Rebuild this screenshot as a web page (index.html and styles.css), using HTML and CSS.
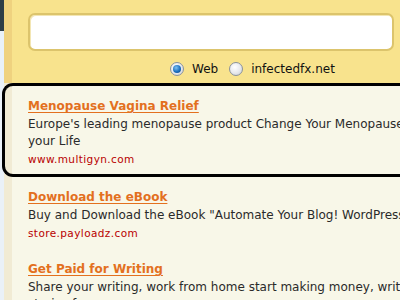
FILE: index.html
```html
<!DOCTYPE html>
<html>
<head>
<meta charset="utf-8">
<link rel="stylesheet" href="styles.css">
</head>
<body>
<div class="page">
  <header class="top">
    <div class="edge"></div>
    <div class="gutter"></div>
    <div class="panel">
      <div class="search"></div>
      <div class="scope">
        <span class="radio on"><span class="dot"></span></span>
        <span class="label">Web</span>
        <span class="radio"></span>
        <span class="label">infectedfx.net</span>
      </div>
    </div>
  </header>
  <main class="results">
    <div class="ad sel">
      <a class="title">Menopause Vagina Relief</a>
      <p class="desc">Europe's leading menopause product Change Your Menopause<br>your Life</p>
      <p class="url">www.multigyn.com</p>
    </div>
    <div class="ad">
      <a class="title">Download the eBook</a>
      <p class="desc">Buy and Download the eBook "Automate Your Blog! WordPress</p>
      <p class="url">store.payloadz.com</p>
    </div>
    <div class="ad">
      <a class="title">Get Paid for Writing</a>
      <p class="desc">Share your writing, work from home start making money, write<br>stories for money.</p>
    </div>
  </main>
</div>
</body>
</html>
```
FILE: styles.css
```css
html, body {
  margin: 0;
  padding: 0;
}
body {
  width: 400px;
  height: 300px;
  overflow: hidden;
  font-family: "DejaVu Sans", Verdana, sans-serif;
  background: #f8f7e8;
}
.page {
  width: 400px;
}
.top {
  display: flex;
  height: 83px;
}
.edge {
  width: 4px;
  background: linear-gradient(#2d3c46 0 31px, #e9f1f9 31px);
}
.gutter {
  width: 8px;
  background: #efd27f;
}
.panel {
  flex: 1;
  background: #f8e38d;
  padding: 13px 6px 0 16px;
}
.search {
  height: 34px;
  background: #fff;
  border: 2px solid #dcc46c;
  border-radius: 7px;
  box-shadow: inset 1px 1px 0 #f3e6b4;
}
.scope {
  display: flex;
  align-items: center;
  margin-top: 11px;
  padding-left: 142px;
  font-size: 12px;
  color: #111;
  height: 14px;
}
.label {
  margin-left: 8px;
  margin-right: 11px;
}
.radio {
  box-sizing: border-box;
  width: 14px;
  height: 14px;
  border-radius: 50%;
  border: 1px solid #8a929c;
  background: radial-gradient(circle at 40% 35%, #ffffff 0, #e6e8ec 55%, #c4c9d1 100%);
  display: flex;
  align-items: center;
  justify-content: center;
}
.dot {
  width: 8px;
  height: 8px;
  border-radius: 50%;
  background: radial-gradient(circle at 40% 35%, #7fc2f2 0, #1c70c0 55%, #0b3f7a 100%);
}
.results {
  display: flex;
  flex-direction: column;
  background: linear-gradient(to right, #eaf1f8 0 4px, #f1ebd4 4px 12px, #f8f7e8 12px);
  height: 217px;
}
.ad {
  padding: 10px 0 6px 28px;
  white-space: nowrap;
}
.ad.sel {
  margin-left: 2px;
  padding: 10px 0 5px 23px;
  border: 3px solid #000;
  border-right: none;
  border-radius: 11px 0 0 11px;
}
.title {
  display: block;
  font-weight: bold;
  font-size: 12px;
  line-height: 20px;
  color: #e3701e;
  text-decoration: underline;
  text-underline-offset: 2px;
}
.desc {
  margin: 0;
  font-size: 12px;
  line-height: 17px;
  color: #2a2a2a;
}
.url {
  margin: 0;
  font-size: 10.5px;
  line-height: 19px;
  color: #b80000;
  letter-spacing: 0.4px;
}
```
